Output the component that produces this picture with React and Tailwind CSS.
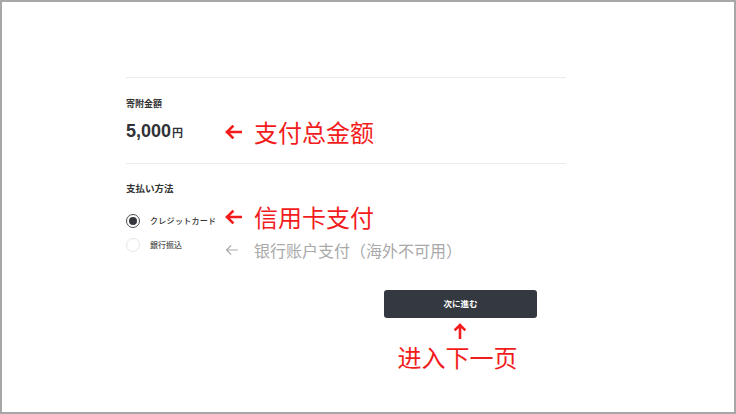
const jp = { fontFamily: '"Noto Sans CJK JP", "Noto Sans", sans-serif' };
const sc = { fontFamily: '"Noto Sans CJK SC", "Noto Sans", sans-serif' };

function LeftArrow({ color = "#f21c1c", w = 17, stroke = 2.6 }) {
  return (
    <svg width={w} height="14" viewBox="0 0 17 14" fill="none">
      <path d="M2 7H16M7.5 1.5L2 7l5.5 5.5" stroke={color} strokeWidth={stroke} strokeLinecap="square" />
    </svg>
  );
}

function Radio({ checked }) {
  return checked ? (
    <span className="flex h-[14px] w-[14px] items-center justify-center rounded-full border-[1.5px] border-[#4a4d52]">
      <span className="h-[8px] w-[8px] rounded-full bg-[#33373d]" />
    </span>
  ) : (
    <span className="h-[14px] w-[14px] rounded-full border border-[#e6e6e6]" />
  );
}

export default function App() {
  return (
    <div className="h-[414px] w-[736px] overflow-hidden border-2 border-[#a7a7a7] bg-white">
      <div className="ml-[124px] w-[440px] pt-[75px]">
        <div className="h-px bg-[#ececec]" />

        <div className="pt-[19px] text-[9px] font-bold text-[#333]" style={jp}>
          寄附金額
        </div>
        <div className="mt-[9px] flex h-[24px] items-center">
          <div className="flex w-[99px] items-baseline text-[#2f3237]">
            <span className="text-[18px] font-bold" style={{ fontFamily: '"Liberation Sans", Arial, sans-serif' }}>
              5,000
            </span>
            <span className="ml-px text-[11px] font-bold" style={jp}>円</span>
          </div>
          <LeftArrow />
          <span className="ml-[12px] text-[24px] leading-none text-[#f21c1c]" style={sc}>
            支付总金额
          </span>
        </div>

        <div className="mt-[19px] h-px bg-[#ececec]" />

        <div className="pt-[17px] text-[9.5px] font-bold text-[#333]" style={jp}>
          支払い方法
        </div>
        <div className="mt-[19px] flex h-[14px] items-center">
          <div className="flex w-[99px] items-center">
            <Radio checked />
            <span className="ml-[10px] text-[8px] font-medium tracking-[0.3px] text-[#333]" style={jp}>
              クレジットカード
            </span>
          </div>
          <div className="mt-[-8px] flex items-center">
            <LeftArrow />
            <span className="ml-[12px] text-[24px] leading-none text-[#f21c1c]" style={sc}>
              信用卡支付
            </span>
          </div>
        </div>
        <div className="mt-[10px] flex h-[14px] items-center">
          <div className="flex w-[99px] items-center">
            <Radio />
            <span className="ml-[10px] text-[8px] font-medium text-[#555]" style={jp}>
              銀行振込
            </span>
          </div>
          <div className="mt-[10px] flex items-center">
            <LeftArrow color="#a9a9a9" w={13} stroke={1.6} />
            <span className="ml-[16px] text-[16px] leading-none text-[#a9a9a9]" style={sc}>
              银行账户支付（海外不可用）
            </span>
          </div>
        </div>

        <div className="ml-[258px] mt-[38px] flex w-[153px] flex-col items-center">
          <button
            className="flex h-[28px] w-[153px] items-center justify-center rounded-[3px] bg-[#343941] text-[8.5px] font-bold text-white"
            style={jp}
          >
            次に進む
          </button>
          <svg className="mt-[5px] ml-[-1px]" width="12" height="16" viewBox="0 0 12 16" fill="none">
            <path d="M6 15V2M1.5 6.5L6 2l4.5 4.5" stroke="#f21c1c" strokeWidth="2.6" strokeLinecap="square" />
          </svg>
          <span className="ml-[-6px] mt-[6px] text-[24px] leading-none text-[#f21c1c]" style={sc}>
            进入下一页
          </span>
        </div>
      </div>
    </div>
  );
}
